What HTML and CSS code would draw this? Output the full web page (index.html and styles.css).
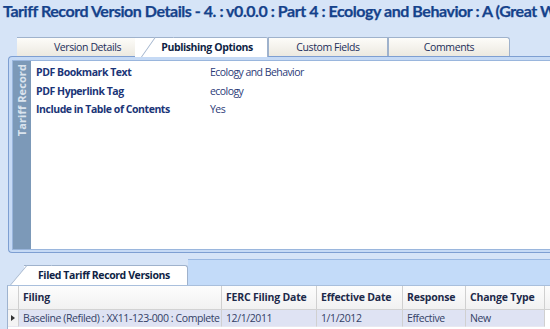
FILE: index.html
```html
<!DOCTYPE html>
<html>
<head>
<meta charset="utf-8">
<link rel="stylesheet" href="styles.css">
</head>
<body>
<div class="title">Tariff Record Version Details - 4. : v0.0.0 : Part 4 : Ecology and Behavior : A (Great Western Railway)</div>
<div class="tabs">
  <div class="tab first">Version Details</div>
  <div class="tab active">Publishing Options</div>
  <div class="tab">Custom Fields</div>
  <div class="tab last">Comments</div>
</div>
<div class="panel">
  <div class="panel-inner">
    <div class="side"><span>Tariff Record</span></div>
    <div class="content">
      <div class="row"><span class="lbl">PDF Bookmark Text</span><span class="val">Ecology and Behavior</span></div>
      <div class="row"><span class="lbl">PDF Hyperlink Tag</span><span class="val">ecology</span></div>
      <div class="row"><span class="lbl">Include in Table of Contents</span><span class="val">Yes</span></div>
    </div>
  </div>
</div>
<div class="lower">
  <div class="ltab">Filed Tariff Record Versions</div>
  <div class="band"></div>
</div>
<div class="grid">
  <div class="ghead">
    <div class="c ind"></div>
    <div class="c filing">Filing</div>
    <div class="c ferc">FERC Filing Date</div>
    <div class="c eff">Effective Date</div>
    <div class="c resp">Response</div>
    <div class="c chg">Change Type</div>
    <div class="c rest"></div>
  </div>
  <div class="grow">
    <div class="c ind"><span class="arrow"></span></div>
    <div class="c filing">Baseline (Refiled) : XX11-123-000 : Complete</div>
    <div class="c ferc">12/1/2011</div>
    <div class="c eff">1/1/2012</div>
    <div class="c resp">Effective</div>
    <div class="c chg">New</div>
  </div>
</div>
</body>
</html>
```
FILE: styles.css
```css
html, body { margin: 0; padding: 0; }
body {
  width: 550px; height: 329px; overflow: hidden;
  background: #d6e4f7;
  font-family: "Open Sans", "DejaVu Sans", sans-serif;
}
.title {
  height: 25px;
  padding: 0 0 0 3px;
  box-sizing: border-box;
  white-space: nowrap; overflow: hidden;
  font-family: Lato, "Open Sans", sans-serif;
  font-weight: bold; font-size: 16px; color: #15428b;
  line-height: 22px; letter-spacing: -0.45px;
  -webkit-text-stroke: 0.25px #15428b;
}
.tabs {
  display: flex; height: 19px; margin-top: 12px; padding-left: 17px;
  position: relative;
}
.tab {
  position: relative; box-sizing: border-box;
  width: 120px; height: 19px;
  border: 1px solid #9fb2cc; border-bottom: none;
  background: linear-gradient(#fdfcf9, #ece9e0);
  font-size: 10.5px; color: #1c2e5a; text-align: center; line-height: 18px;
  letter-spacing: -0.4px;
}
.tab.first {
  width: 128px; border-left: none; padding-left: 14px; border-radius: 0 3px 0 0;
}
.tab.first::before, .tab.active::before {
  content: ""; position: absolute; left: 6px; top: -1px; bottom: 0; width: 18px;
  background: inherit; border-left: 1px solid #9fb2cc; border-top: 1px solid #9fb2cc;
  transform: skewX(-35deg); transform-origin: bottom left; z-index: -1;
}
.tab.active {
  width: 133px; margin-left: -10px; padding-left: 12px;
  background: #fff; font-weight: bold; z-index: 2; border-left: none;
  border-radius: 0 2px 0 0; color: #0f1f45; height: 20px;
}
.tab.active::before { background: #fff; }
.tab.last { border-radius: 0 3px 0 0; width: 122px; }
.panel {
  margin-left: 8px; height: 197px; box-sizing: border-box;
  border: 1px solid #7e9fd2; border-right: none;
  border-radius: 4px 0 0 4px;
  background: #c6daf5;
  padding: 3px 0 2px 3px;
}
.panel-inner {
  display: flex; height: 100%; box-sizing: border-box;
  border: 1px solid #9ab6dd; border-right: none;
}
.side {
  width: 18px; background: #7c99b8;
  display: flex; justify-content: flex-start;
}
.side span {
  writing-mode: vertical-rl; transform: rotate(180deg);
  color: #dbe4ee; font-weight: bold; font-size: 11px; letter-spacing: 0.1px;
  padding-bottom: 3px; text-align: right; align-self: flex-start;
  line-height: 18px; width: 18px;
}
.content { flex: 1; background: #fff; padding-top: 2px; }
.row { display: flex; height: 18.5px; align-items: center; padding-left: 5px; font-size: 10.5px; }
.lbl { width: 174px; font-weight: bold; color: #1b3577; letter-spacing: -0.45px; }
.val { color: #2c3b78; letter-spacing: -0.55px; }
.lower { display: flex; height: 32px; align-items: flex-end; }
.ltab {
  position: relative; margin-left: 24px; width: 164px; height: 20px; box-sizing: border-box;
  background: #fff; border: 1px solid #9fb2cc; border-left: none; border-bottom: none;
  border-radius: 0 3px 0 0;
  font-weight: bold; font-size: 10.5px; color: #0f1f45; line-height: 19px; padding-left: 14px;
  letter-spacing: -0.4px; z-index: 1;
}
.ltab::before {
  content: ""; position: absolute; left: -14px; top: -1px; bottom: 0; width: 24px;
  background: #fff; border-left: 1px solid #9fb2cc; border-top: 1px solid #9fb2cc;
  transform: skewX(-40deg); transform-origin: bottom left; z-index: -1;
}
.band {
  flex: 1; height: 26px; box-sizing: border-box;
  background: #c3dbf9; border-top: 1px solid #9bb9e2;
}
.grid {
  margin-left: 7px; background: #fff; height: 50px;
  border-top: 1px solid #a9bfdc; border-left: 1px solid #9eb3cf;
  font-size: 10.5px;
}
.ghead, .grow { display: flex; }
.ghead { height: 23px; background: linear-gradient(#fdfdfd, #f1f1f1); border-bottom: 1px solid #d2d2d2; }
.ghead .c { font-weight: bold; color: #1d2a4a; line-height: 22px; letter-spacing: -0.2px; }
.grow { height: 17px; }
.grow .c { background: #dfe3f3; color: #333f66; line-height: 16px; letter-spacing: -0.4px; border-bottom: 1px solid #e8e8f0; }
.c { box-sizing: border-box; border-right: 1px solid #d0d0d0; padding-left: 4px; white-space: nowrap; overflow: hidden; }
.ind { width: 11px; padding: 0; position: relative; }
.grow .ind { background: #f4f4f4; }
.filing { width: 203px; }
.ferc { width: 95px; }
.eff { width: 86px; }
.resp { width: 63px; }
.chg { width: 79px; }
.rest { flex: 1; border-right: none; }
.arrow {
  display: block; width: 0; height: 0; margin: 5px 0 0 3px;
  border-left: 4px solid #333; border-top: 3px solid transparent; border-bottom: 3px solid transparent;
}
```
